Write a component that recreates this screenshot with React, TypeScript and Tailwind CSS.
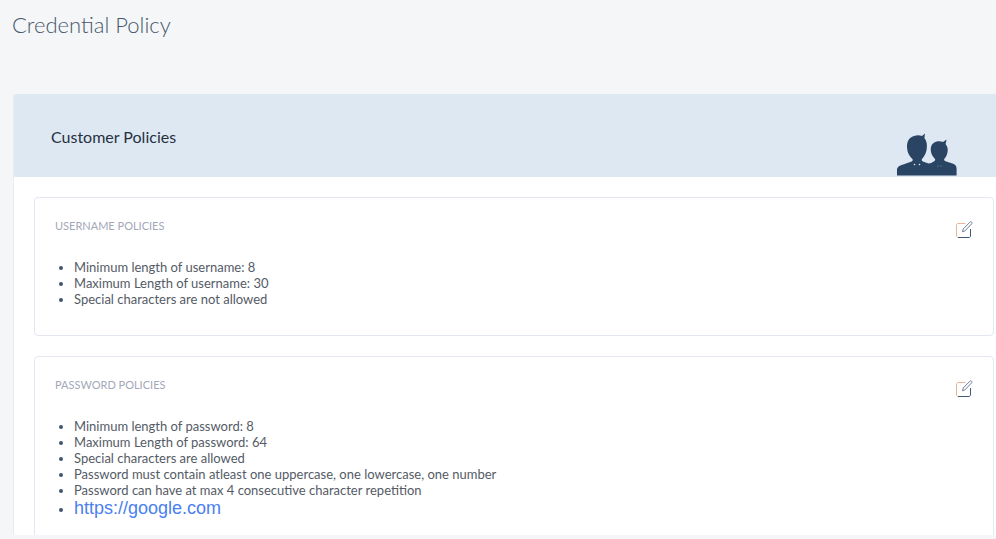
const usernameRules = [
  "Minimum length of username: 8",
  "Maximum Length of username: 30",
  "Special characters are not allowed",
];
const passwordRules = [
  "Minimum length of password: 8",
  "Maximum Length of password: 64",
  "Special characters are allowed",
  "Password must contain atleast one uppercase, one lowercase, one number",
  "Password can have at max 4 consecutive character repetition",
];

function EditIcon() {
  return (
    <svg width="17" height="17" viewBox="0 0 17 17" fill="none" className="mt-[2px] shrink-0">
      <path d="M9.5 2.5H2C1.2 2.5 0.5 3.2 0.5 4V15C0.5 15.8 1.2 16.5 2 16.5" stroke="#e8b49c" strokeWidth="1" />
      <path d="M2 16.5H13C13.8 16.5 14.5 15.8 14.5 15V8" stroke="#3f5a7c" strokeWidth="1" />
      <path d="M6.5 10.8L7.2 8L13.9 1.2C14.4 0.7 15.1 0.7 15.6 1.2C16.1 1.7 16.1 2.4 15.6 2.9L8.9 9.9L6.5 10.8Z" stroke="#6d8099" strokeWidth="1" strokeLinejoin="round" />
    </svg>
  );
}

function Users() {
  return (
    <svg width="60" height="43" viewBox="0 0 60 43" className="mt-auto mb-[1px] shrink-0" fill="#2a4563">
      <path d="M0 42.5V36.5C0 34.5 1.5 33 4 32.2L14 28.8C15.5 28.2 16 27.2 15.6 26.2C12.5 23.5 10.6 20 10.2 16C9.4 9 11.6 4.5 17 3C20 2 23 2.3 25 3L28 0.5L27.4 5C30 8 30.2 12 29.7 16C29.2 20 27.4 23.5 24.8 26.2C24.6 27.2 25 28.2 26.5 28.8L31.5 30.6C33.5 30.6 36 29 37.5 28C38.2 27.5 38.3 26.8 38 26C35.5 23.5 34 20.5 33.8 17.5C33.4 13 35.5 9.8 39 8.8C41.5 8.1 44 8.3 46 9L49.6 6.5L48.6 11C50.6 13.5 51 16 50.6 18.5C50.2 21.5 49 24 47.2 26C46.9 27 47.3 27.8 48.5 28.3L55.5 30.6C58 31.5 59.6 33 59.6 35.5V42.5Z" />
      <circle cx="17.5" cy="31.5" r="0.8" fill="#dee8f3" />
      <circle cx="22.5" cy="31.5" r="0.8" fill="#dee8f3" />
      <circle cx="41" cy="33" r="0.5" fill="#dee8f3" fillOpacity="0.6" />
      <circle cx="44" cy="33" r="0.5" fill="#dee8f3" fillOpacity="0.6" />
    </svg>
  );
}

function PolicyCard({ title, rules, link, className }: { title: string; rules: string[]; link?: string; className: string }) {
  return (
    <section className={`rounded-[4px] border border-[#e3e7ef] bg-white pl-5 pr-5 pt-[21px] ${className}`}>
      <div className="flex items-start justify-between">
        <h3 className="text-[11px] leading-[14px] font-normal text-[#a3a8b8] uppercase">{title}</h3>
        <EditIcon />
      </div>
      <ul className="mt-[21px] list-disc pl-[19px] text-[13px] leading-[16px] text-[#545b66] marker:text-[#3f5670]">
        {rules.map((rule) => (
          <li key={rule}>{rule}</li>
        ))}
        {link && (
          <li>
            <a href="#" className="font-['Liberation_Sans',sans-serif] text-[18px] leading-[20px] text-[#4a80f0]">
              {link}
            </a>
          </li>
        )}
      </ul>
    </section>
  );
}

export default function App() {
  return (
    <div className="flex h-[539px] w-[996px] flex-col overflow-hidden bg-[#f5f6f8] pb-1 pl-[13px] font-['Lato',sans-serif]">
      <h1 className="-ml-[1px] mt-[11px] text-[22px] leading-[28px] font-light text-[#46566b]">Credential Policy</h1>
      <main className="mt-[55px] flex min-h-0 flex-1 flex-col overflow-hidden rounded-tl-[3px] border-l border-[#e8ebf1] bg-white">
        <header className="flex h-[83px] shrink-0 justify-between bg-[#dee8f3] pr-[39px]">
          <h2 className="mt-[33px] pl-[37px] text-[16px] leading-[20px] font-normal text-[#26313f]">Customer Policies</h2>
          <Users />
        </header>
        <div className="flex flex-col gap-5 pt-5 pl-5 pr-[2px]">
          <PolicyCard title="Username Policies" rules={usernameRules} className="h-[139px] shrink-0" />
          <PolicyCard title="Password Policies" rules={passwordRules} link="https://google.com" className="h-[200px] shrink-0" />
        </div>
      </main>
    </div>
  );
}
